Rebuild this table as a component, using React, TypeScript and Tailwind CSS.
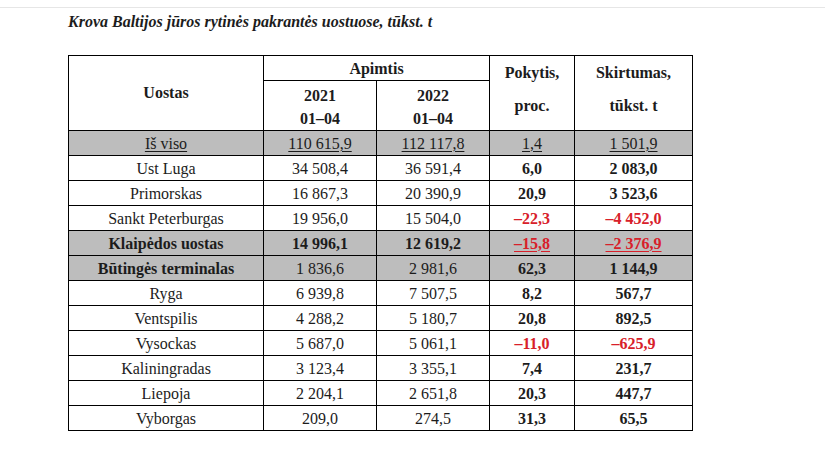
import React from "react";

type Cell = { v: string; b?: boolean; red?: boolean; u?: boolean };
type Row = { name: Cell; gray?: boolean; cells: Cell[] };

const rows: Row[] = [
  {
    name: { v: "Iš viso", u: true },
    gray: true,
    cells: [
      { v: "110 615,9", u: true },
      { v: "112 117,8", u: true },
      { v: "1,4", u: true },
      { v: "1 501,9", u: true },
    ],
  },
  { name: { v: "Ust Luga" }, cells: [{ v: "34 508,4" }, { v: "36 591,4" }, { v: "6,0", b: true }, { v: "2 083,0", b: true }] },
  { name: { v: "Primorskas" }, cells: [{ v: "16 867,3" }, { v: "20 390,9" }, { v: "20,9", b: true }, { v: "3 523,6", b: true }] },
  {
    name: { v: "Sankt Peterburgas" },
    cells: [{ v: "19 956,0" }, { v: "15 504,0" }, { v: "–22,3", b: true, red: true }, { v: "–4 452,0", b: true, red: true }],
  },
  {
    name: { v: "Klaipėdos uostas", b: true },
    gray: true,
    cells: [
      { v: "14 996,1", b: true },
      { v: "12 619,2", b: true },
      { v: "–15,8", b: true, red: true, u: true },
      { v: "–2 376,9", b: true, red: true, u: true },
    ],
  },
  {
    name: { v: "Būtingės terminalas", b: true },
    gray: true,
    cells: [{ v: "1 836,6" }, { v: "2 981,6" }, { v: "62,3", b: true }, { v: "1 144,9", b: true }],
  },
  { name: { v: "Ryga" }, cells: [{ v: "6 939,8" }, { v: "7 507,5" }, { v: "8,2", b: true }, { v: "567,7", b: true }] },
  { name: { v: "Ventspilis" }, cells: [{ v: "4 288,2" }, { v: "5 180,7" }, { v: "20,8", b: true }, { v: "892,5", b: true }] },
  {
    name: { v: "Vysockas" },
    cells: [{ v: "5 687,0" }, { v: "5 061,1" }, { v: "–11,0", b: true, red: true }, { v: "–625,9", b: true, red: true }],
  },
  { name: { v: "Kaliningradas" }, cells: [{ v: "3 123,4" }, { v: "3 355,1" }, { v: "7,4", b: true }, { v: "231,7", b: true }] },
  { name: { v: "Liepoja" }, cells: [{ v: "2 204,1" }, { v: "2 651,8" }, { v: "20,3", b: true }, { v: "447,7", b: true }] },
  { name: { v: "Vyborgas" }, cells: [{ v: "209,0" }, { v: "274,5" }, { v: "31,3", b: true }, { v: "65,5", b: true }] },
];

const td = "border border-black h-[25px] p-0 text-center align-middle leading-[23px]";

const CellText: React.FC<{ c: Cell }> = ({ c }) => (
  <span
    className={
      (c.b ? "font-bold " : "") +
      (c.red ? "text-[#d8202a] " : "") +
      (c.u ? "underline underline-offset-2 decoration-1" : "")
    }
  >
    {c.v}
  </span>
);

export default function App() {
  return (
    <div className="w-[825px] h-[450px] bg-white text-[#1c1c1c] [font-family:'Liberation_Serif','Times_New_Roman',serif] text-[16px] overflow-hidden">
      <div className="h-[8px] border-b border-[#e6e6e6]" />
      <div className="pl-[68px] pt-[5px]">
        <h1 className="italic font-bold text-[16px] leading-[18px]">
          Krova Baltijos jūros rytinės pakrantės uostuose, tūkst. t
        </h1>
        <table className="mt-[24px] border-collapse table-fixed w-[624px] border border-black">
          <colgroup>
            <col className="w-[195px]" />
            <col className="w-[113px]" />
            <col className="w-[113px]" />
            <col className="w-[85px]" />
            <col className="w-[118px]" />
          </colgroup>
          <thead>
            <tr>
              <th rowSpan={2} className="border border-black p-0 font-bold text-center align-middle">
                Uostas
              </th>
              <th colSpan={2} className="border border-black h-[25px] p-0 font-bold text-center leading-[23px]">
                Apimtis
              </th>
              <th rowSpan={2} className="border border-black p-0 pb-[8px] font-bold text-center align-middle leading-[33px]">
                Pokytis,
                <br />
                proc.
              </th>
              <th rowSpan={2} className="border border-black p-0 pb-[8px] font-bold text-center align-middle leading-[33px]">
                Skirtumas,
                <br />
                tūkst. t
              </th>
            </tr>
            <tr>
              <th className="border border-black h-[49px] p-0 pt-[2px] font-bold text-center align-middle leading-[23px]">
                2021
                <br />
                01–04
              </th>
              <th className="border border-black h-[49px] p-0 pt-[2px] font-bold text-center align-middle leading-[23px]">
                2022
                <br />
                01–04
              </th>
            </tr>
          </thead>
          <tbody>
            {rows.map((r) => (
              <tr key={r.name.v} className={r.gray ? "bg-[#bdbdbd]" : ""}>
                <td className={td}>
                  <CellText c={r.name} />
                </td>
                {r.cells.map((c, i) => (
                  <td key={i} className={td}>
                    <CellText c={c} />
                  </td>
                ))}
              </tr>
            ))}
          </tbody>
        </table>
      </div>
    </div>
  );
}
